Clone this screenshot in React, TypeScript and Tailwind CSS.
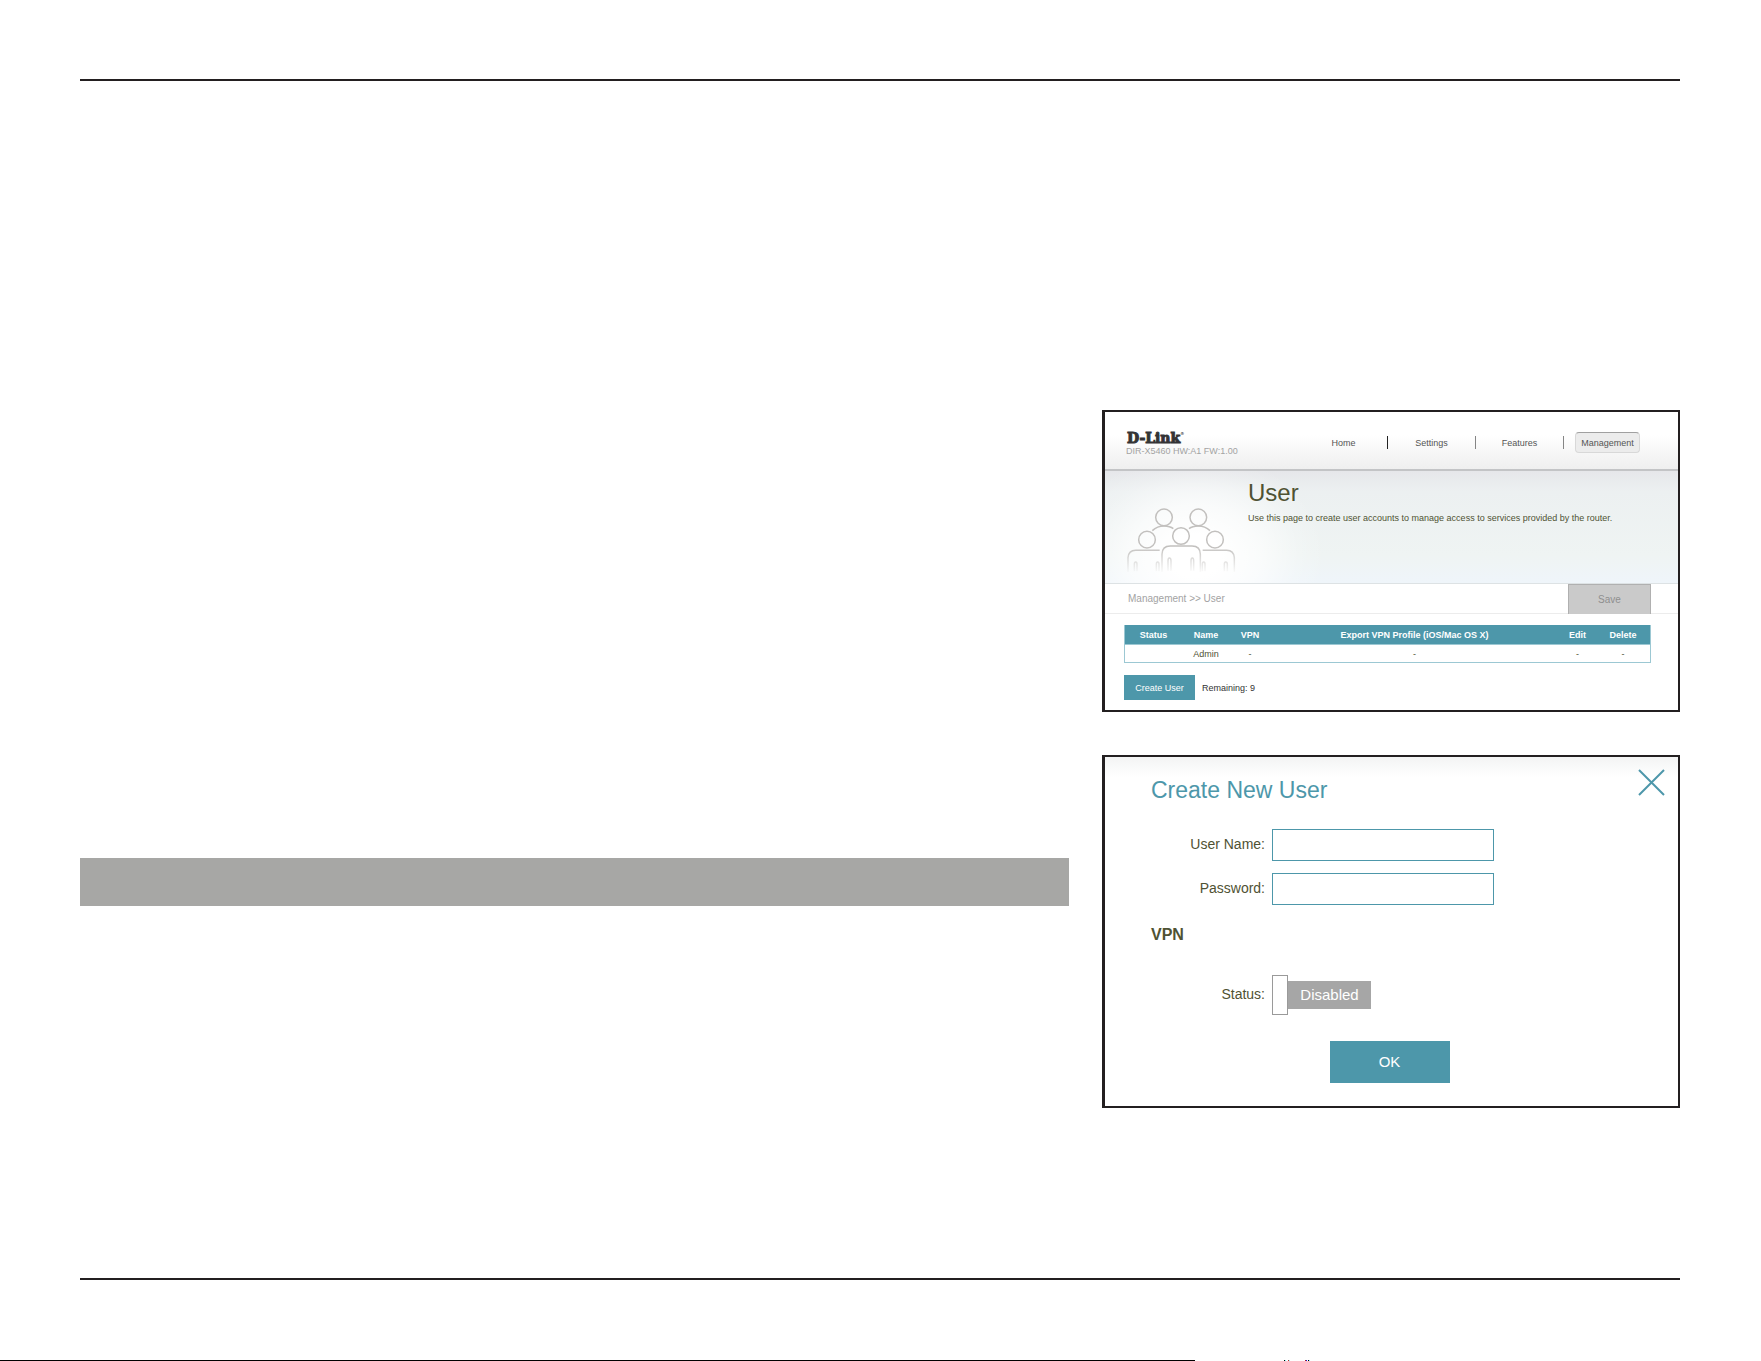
import type { ReactNode } from 'react';

function PeopleIcon() {
  return (
    <svg className="h-[66px] w-[110px]" viewBox="93 322 330 198" fill="none" aria-hidden="true">
      <defs>
        <linearGradient id="fade" gradientUnits="userSpaceOnUse" x1="0" y1="322" x2="0" y2="520">
          <stop offset="0.6" stopColor="#c2c0be" />
          <stop offset="1" stopColor="#c2c0be" stopOpacity="0.04" />
        </linearGradient>
      </defs>
      <g stroke="url(#fade)" strokeWidth="4.5">
        <circle cx="207" cy="353" r="25" />
        <circle cx="310" cy="353" r="25" />
        <circle cx="156" cy="420" r="25" />
        <circle cx="258" cy="409" r="25" />
        <circle cx="360" cy="420" r="25" />
        <path d="M172 393Q187 379 207 379Q225 379 235 387" />
        <path d="M345 393Q330 379 310 379Q292 379 282 387" />
        <path d="M99 517V474Q101 452 122 452H194" />
        <path d="M418 517V474Q416 452 395 452H323" />
        <path d="M201 517V464Q201 439 226 439H291Q316 439 316 464V517" />
        <path d="M118 515V494Q118 487 122 487Q126 487 126 494V515" />
        <path d="M184 515V494Q184 487 188 487Q192 487 192 494V515" />
        <path d="M219 513V484Q219 475 223 475Q228 475 228 484V513" />
        <path d="M288 513V484Q288 475 292 475Q296 475 296 484V513" />
        <path d="M322 515V494Q322 487 326 487Q330 487 330 494V515" />
        <path d="M388 515V494Q388 487 392 487Q397 487 397 494V515" />
      </g>
    </svg>
  );
}

function NavItem({ children, divider, active = false }: { children: ReactNode; divider: string; active?: boolean }) {
  return (
    <li className="flex h-[21px] w-[88px] items-center">
      <span className={`h-[13px] w-px ${divider}`} />
      <a
        href="#"
        className={
          active
            ? 'mx-auto flex h-[21px] w-[65px] items-center justify-center rounded-[4px] border border-[#d8d8d8] border-t-[#a0a0a0] bg-[#ececec]'
            : 'mx-auto'
        }
      >
        {children}
      </a>
    </li>
  );
}

function UserPanel() {
  return (
    <section className="border-2 border-l-[3px] border-[#231f20] bg-white pb-[10px]">
      <header className="flex h-[59px] items-start justify-between border-b-2 border-[#c3c4c6] bg-linear-to-b from-white from-40% to-[#efefef] pr-[27px] pl-[21px]">
        <div className="pt-[18px]">
          <div className="flex items-start pl-px font-['DejaVu_Serif',serif] text-[14px] leading-4 font-bold text-[#333335] [-webkit-text-stroke:1px_#333335]">
            D-Link<span className="text-[4px] leading-2 [-webkit-text-stroke:0]">®</span>
          </div>
          <div className="text-[9px] leading-[10px] text-[#a3a3a3]">DIR-X5460 HW:A1 FW:1.00</div>
        </div>
        <nav className="pt-5">
          <ul className="flex text-[9px] leading-3 text-[#555555]">
            <NavItem divider="bg-transparent">Home</NavItem>
            <NavItem divider="bg-[#222222]">Settings</NavItem>
            <NavItem divider="bg-[#858585]">Features</NavItem>
            <NavItem divider="bg-[#858585]" active>
              Management
            </NavItem>
          </ul>
        </nav>
      </header>

      <div className="flex h-[113px] gap-3 border-b border-[#dde2e4] bg-[radial-gradient(ellipse_130px_105px_at_90px_85px,#ffffff_20%,#ffffffb0_50%,#ffffff30_80%,#ffffff00_100%),linear-gradient(to_bottom,#e6e7ea,#ecf0f1_18%,#eff4f3_75%,#eff5fa)] pl-[21px]">
        <div className="pt-9">
          <PeopleIcon />
        </div>
        <div className="pt-2 text-[#4f5233]">
          <h1 className="text-[24px] leading-7">User</h1>
          <p className="pt-[5px] text-[9px] leading-3">
            Use this page to create user accounts to manage access to services provided by the router.
          </p>
        </div>
      </div>

      <div className="flex h-[30px] justify-between border-b border-[#ececec] pr-[27px] pl-[23px]">
        <div className="pt-[9px] text-[10px] leading-3 text-[#a3a3a3]">Management &gt;&gt; User</div>
        <button className="h-[30px] w-[83px] border border-b-0 border-[#b0b0b0] bg-[#cacaca] text-[10px] text-[#8f8f8f]">
          Save
        </button>
      </div>

      <div className="pt-[11px] pr-[27px] pl-[19px]">
        <table className="w-full table-fixed border-separate border-spacing-0 border border-t-0 border-[#9cc8d3] text-center text-[9px] leading-3 text-[#4f5233]">
          <thead>
            <tr className="h-5 bg-[#4d97aa] text-white">
              <th className="w-[57px] border-b border-[#9cc8d3] p-0">Status</th>
              <th className="w-[48px] border-b border-[#9cc8d3] p-0">Name</th>
              <th className="w-[40px] border-b border-[#9cc8d3] p-0">VPN</th>
              <th className="border-b border-[#9cc8d3] p-0">Export VPN Profile (iOS/Mac OS X)</th>
              <th className="w-[37px] border-b border-[#9cc8d3] p-0">Edit</th>
              <th className="w-[54px] border-b border-[#9cc8d3] p-0">Delete</th>
            </tr>
          </thead>
          <tbody>
            <tr className="h-[17px]">
              <td className="p-0"></td>
              <td className="p-0">Admin</td>
              <td className="p-0">-</td>
              <td className="p-0">-</td>
              <td className="p-0">-</td>
              <td className="p-0">-</td>
            </tr>
          </tbody>
        </table>
        <div className="flex items-center gap-[7px] pt-3 text-[9px] leading-3">
          <button className="h-[25px] w-[71px] bg-[#4d97aa] text-white">Create User</button>
          <span className="text-[#333333]">Remaining: 9</span>
        </div>
      </div>
    </section>
  );
}

function Field({ id, label, type }: { id: string; label: string; type: string }) {
  return (
    <div className="flex items-center gap-[7px]">
      <label htmlFor={id} className="w-[160px] pb-[2px] text-right">
        {label}
      </label>
      <input id={id} type={type} className="h-8 w-[222px] border border-[#4d97aa] bg-white px-2" />
    </div>
  );
}

function CreateUserDialog() {
  return (
    <section
      role="dialog"
      aria-labelledby="dialog-title"
      className="border-2 border-l-[3px] border-[#231f20] bg-[linear-gradient(to_bottom,#f3f4f4,#ffffff_20px)] pb-[23px] text-[14px] leading-4 text-[#4f5233]"
    >
      <div className="flex items-start justify-between pt-3 pr-[13px] pl-[46px]">
        <h2 id="dialog-title" className="pt-2 text-[23px] leading-[26px] text-[#4d97aa]">
          Create New User
        </h2>
        <button aria-label="Close" className="text-[#4d97aa]">
          <svg className="size-[27px]" viewBox="0 0 27 27" fill="none" stroke="currentColor" strokeWidth="2" aria-hidden="true">
            <path d="M1 1L26 26M26 1L1 26" />
          </svg>
        </button>
      </div>
      <div className="flex flex-col gap-3 pt-[26px]">
        <Field id="user-name" label="User Name:" type="text" />
        <Field id="password" label="Password:" type="password" />
      </div>
      <h3 className="pt-[21px] pl-[46px] text-[16px] leading-[18px] font-bold">VPN</h3>
      <div className="flex items-center gap-[7px] pt-[31px]">
        <span id="status-label" className="w-[160px] pb-[2px] text-right">
          Status:
        </span>
        <button
          role="switch"
          aria-checked="false"
          aria-labelledby="status-label"
          className="flex items-center text-[15px] leading-4 text-white"
        >
          <span className="h-10 w-4 border border-[#9a9a9a] bg-white" />
          <span className="flex h-7 w-[83px] items-center justify-center bg-[#a6a6a6]">Disabled</span>
        </button>
      </div>
      <div className="flex justify-center pt-[26px] pr-1">
        <button className="h-[42px] w-[120px] bg-[#4d97aa] text-[15px] text-white">OK</button>
      </div>
    </section>
  );
}

export default function App() {
  return (
    <div className="flex min-h-screen flex-col bg-white font-['Liberation_Sans',Arial,sans-serif]">
      <div className="flex-1 pt-[79px] pr-[81px] pl-20">
        <hr className="border-t-2 border-[#231f20]" />
        <main className="flex gap-[33px]">
          <div className="flex-1 pt-[777px]">
            <div className="h-12 bg-[#a7a7a5]" />
          </div>
          <div className="flex w-[578px] flex-col gap-[43px] pt-[329px]">
            <UserPanel />
            <CreateUserDialog />
          </div>
        </main>
        <hr className="mt-[170px] border-t-2 border-[#231f20]" />
      </div>
      <footer className="flex h-px">
        <div className="w-[1195px] bg-black" />
        <svg className="ml-[89px] h-px w-[26px]" viewBox="0 0 26 1" shapeRendering="crispEdges" aria-hidden="true">
          <path fill="#000000" d="M0 0h1v1h-1zM24 0h1v1h-1z" />
          <path fill="#80ffff" d="M1 0h1v1h-1zM5 0h1v1h-1zM25 0h1v1h-1z" />
          <path fill="#c02020" d="M4 0h1v1h-1zM21 0h1v1h-1z" />
          <path fill="#2020e0" d="M22 0h1v1h-1z" />
        </svg>
      </footer>
    </div>
  );
}
